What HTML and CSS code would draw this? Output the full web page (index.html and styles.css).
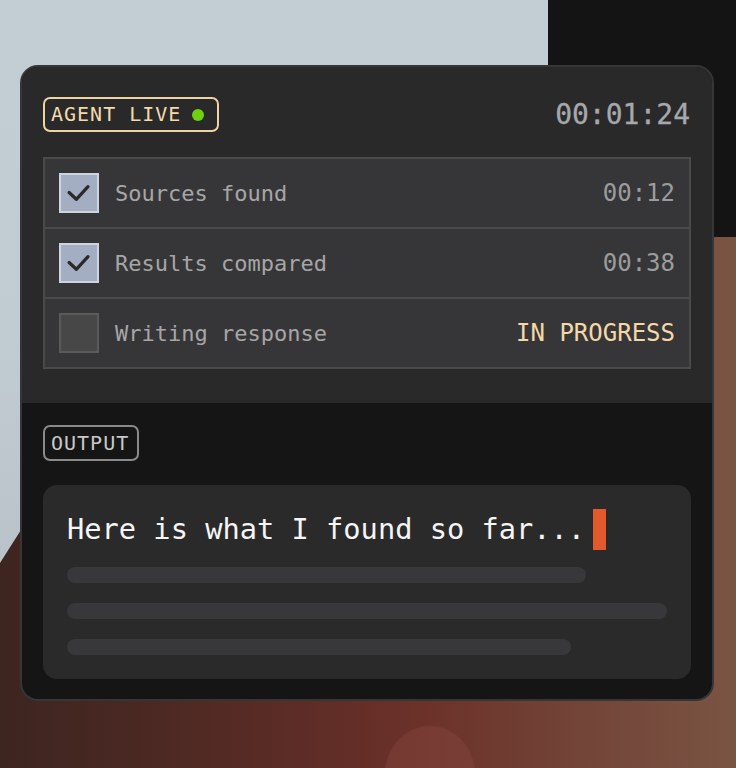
FILE: index.html
```html
<!DOCTYPE html>
<html lang="en">
<head>
<meta charset="utf-8">
<title>Agent Live</title>
<link rel="stylesheet" href="styles.css">
</head>
<body>
<div class="scene">
  <div class="card">
    <section class="top">
      <header class="head">
        <span class="badge live">AGENT LIVE<span class="dot"></span></span>
        <span class="timer">00:01:24</span>
      </header>
      <ul class="tasks">
        <li class="task">
          <span class="box checked"><svg viewBox="0 0 40 40" width="36" height="36"><path d="M9 19.5 L17 27 L30 13" fill="none" stroke="#2a2a2b" stroke-width="3.6" stroke-linecap="round" stroke-linejoin="round"/></svg></span>
          <span class="label">Sources found</span>
          <span class="time">00:12</span>
        </li>
        <li class="task">
          <span class="box checked"><svg viewBox="0 0 40 40" width="36" height="36"><path d="M9 19.5 L17 27 L30 13" fill="none" stroke="#2a2a2b" stroke-width="3.6" stroke-linecap="round" stroke-linejoin="round"/></svg></span>
          <span class="label">Results compared</span>
          <span class="time">00:38</span>
        </li>
        <li class="task">
          <span class="box"></span>
          <span class="label">Writing response</span>
          <span class="time progress">IN PROGRESS</span>
        </li>
      </ul>
    </section>
    <section class="bottom">
      <span class="badge out">OUTPUT</span>
      <div class="output">
        <p class="line">Here is what I found so far...<span class="cursor"></span></p>
        <div class="skel s1"></div>
        <div class="skel s2"></div>
        <div class="skel s3"></div>
      </div>
    </section>
  </div>
</div>
</body>
</html>
```

FILE: styles.css
```css
* { box-sizing: border-box; }
html, body { margin: 0; padding: 0; }
body {
  width: 736px;
  height: 768px;
  overflow: hidden;
  font-family: "DejaVu Sans Mono", "Liberation Mono", monospace;
}
.scene {
  position: relative;
  width: 736px;
  height: 768px;
  padding: 65px 22px 0 20px;
  overflow: hidden;
  background:
    radial-gradient(ellipse 46px 50px at 430px 775px, rgba(140, 75, 68, 0.35) 0, rgba(140, 75, 68, 0.35) 96%, rgba(140,75,68,0) 100%),
    linear-gradient(90deg, #3d2520 0%, #4f2923 25%, #622d27 46%, #6c322a 58%, #734538 80%, #7a5443 100%);
}
.scene::before {
  content: "";
  position: absolute;
  left: 0;
  top: 0;
  width: 548px;
  height: 570px;
  background: linear-gradient(180deg, #c3ced4 0%, #c1ccd2 60%, #b9c2c8 100%);
  clip-path: polygon(0 0, 100% 0, 100% 20%, 40px 500px, 0 563px);
}
.scene::after {
  content: "";
  position: absolute;
  left: 548px;
  top: 0;
  right: 0;
  height: 237px;
  background: #141414;
}
.card {
  position: relative;
  z-index: 1;
  width: 694px;
  height: 636px;
  border-radius: 18px;
  border: 2px solid #363636;
  overflow: hidden;
  background: #151515;
  display: flex;
  flex-direction: column;
}
.top {
  background: #292929;
  padding: 30px 21px 34px 21px;
}
.head {
  display: flex;
  align-items: center;
  justify-content: space-between;
  height: 35px;
  margin-bottom: 25px;
}
.badge {
  display: inline-flex;
  align-items: center;
  height: 35px;
  border: 2px solid;
  border-radius: 7px;
  font-size: 20px;
  letter-spacing: 1px;
  line-height: 23px;
  padding: 0 7px 0 6px;
}
.live {
  color: #f4d9aa;
  border-color: #f0d3a2;
  padding-right: 13px;
}
.dot {
  width: 12px;
  height: 12px;
  border-radius: 50%;
  background: #6fd00f;
  margin-left: 11px;
}
.timer {
  font-size: 28px;
  color: #a5a8ac;
  letter-spacing: 0;
  padding-right: 1px;
  -webkit-text-stroke: 0.3px #a5a8ac;
}
.tasks {
  list-style: none;
  margin: 0;
  padding: 0;
  border: 2px solid #4a4a4b;
  background: #363638;
}
.task {
  display: flex;
  align-items: center;
  height: 70px;
  padding: 0 14px 0 14px;
  border-top: 2px solid #4a4a4b;
}
.task:first-child { border-top: 0; height: 68px; }
.box {
  width: 40px;
  height: 40px;
  border: 2px solid #5a5a5b;
  background: #474748;
  display: flex;
  align-items: center;
  justify-content: center;
  flex: none;
}
.box.checked {
  background: #a4aec3;
  border-color: #cdd4de;
}
.box svg { display: block; }
.label {
  margin-left: 16px;
  font-size: 22px;
  color: #a6a6a6;
  flex: 1;
}
.time {
  font-size: 24px;
  color: #9c9c9c;
}
.time.progress { color: #f4d8a7; }
.bottom {
  flex: 1;
  padding: 22px 21px 20px 21px;
  display: flex;
  flex-direction: column;
  align-items: flex-start;
}
.out {
  color: #c9c9c9;
  border-color: #8a8a8a;
  height: 36px;
  padding-right: 8px;
}
.output {
  margin-top: 24px;
  align-self: stretch;
  background: #2a2a2a;
  border-radius: 14px;
  padding: 24px 24px 24px 24px;
}
.line {
  margin: 0;
  font-size: 28.7px;
  line-height: 41px;
  color: #f5f5f5;
  height: 41px;
  white-space: nowrap;
}
.cursor {
  display: inline-block;
  width: 13px;
  height: 41px;
  background: #e2592e;
  vertical-align: top;
  margin-left: 8px;
}
.skel {
  height: 16px;
  border-radius: 8px;
  background: #38383a;
  margin-top: 20px;
}
.s1 { width: 519px; margin-top: 17px; }
.s2 { width: 600px; }
.s3 { width: 504px; }
```
